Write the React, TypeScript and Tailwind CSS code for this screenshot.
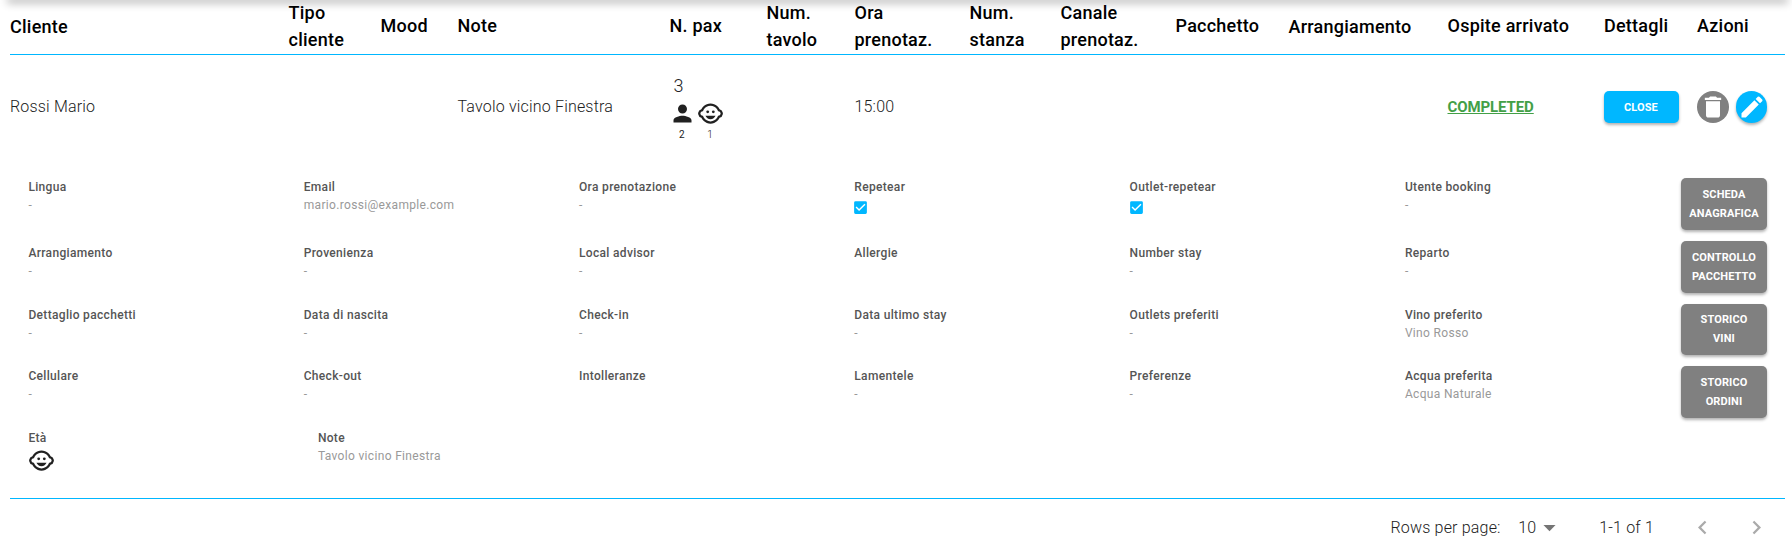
import { MdPerson, MdChildCare, MdDelete, MdEdit, MdCheckBox, MdArrowDropDown, MdChevronLeft, MdChevronRight } from 'react-icons/md';

const columns = [
  ['Cliente'], ['Tipo', 'cliente'], ['Mood'], ['Note'], ['N. pax'], ['Num.', 'tavolo'], ['Ora', 'prenotaz.'],
  ['Num.', 'stanza'], ['Canale', 'prenotaz.'], ['Pacchetto'], ['Arrangiamento'], ['Ospite arrivato'], ['Dettagli'], ['Azioni'],
];

const tableGrid =
  'grid grid-cols-[278.5px_92px_77px_212px_97px_88px_115px_91px_115px_113px_159px_156.5px_93px_1fr] items-center';

type Detail = { label: string; value?: string; checked?: boolean };

const details: Detail[][] = [
  [
    { label: 'Lingua', value: '-' }, { label: 'Email', value: 'mario.rossi@example.com' },
    { label: 'Ora prenotazione', value: '-' }, { label: 'Repetear', checked: true },
    { label: 'Outlet-repetear', checked: true }, { label: 'Utente booking', value: '-' },
  ],
  [
    { label: 'Arrangiamento', value: '-' }, { label: 'Provenienza', value: '-' },
    { label: 'Local advisor', value: '-' }, { label: 'Allergie' },
    { label: 'Number stay', value: '-' }, { label: 'Reparto', value: '-' },
  ],
  [
    { label: 'Dettaglio pacchetti', value: '-' }, { label: 'Data di nascita', value: '-' },
    { label: 'Check-in', value: '-' }, { label: 'Data ultimo stay', value: '-' },
    { label: 'Outlets preferiti', value: '-' }, { label: 'Vino preferito', value: 'Vino Rosso' },
  ],
  [
    { label: 'Cellulare', value: '-' }, { label: 'Check-out', value: '-' },
    { label: 'Intolleranze' }, { label: 'Lamentele', value: '-' },
    { label: 'Preferenze', value: '-' }, { label: 'Acqua preferita', value: 'Acqua Naturale' },
  ],
];

const actions = [['SCHEDA', 'ANAGRAFICA'], ['CONTROLLO', 'PACCHETTO'], ['STORICO', 'VINI'], ['STORICO', 'ORDINI']];

function Field({ label, value, checked }: Detail) {
  return (
    <div className="text-xs leading-[18px] tracking-[0.33px]">
      <div className="font-medium text-[#555]">{label}</div>
      {checked ? <MdCheckBox className="-ml-0.5 mt-[3px] size-[17px] text-[#00b7ff]" /> : <div className="text-[#999]">{value}</div>}
    </div>
  );
}

export default function App() {
  return (
    <div className="h-[542px] w-full overflow-hidden bg-white pl-2.5 pr-[7px] font-[Roboto,sans-serif]">
      <div className="h-0 shadow-[0_0_8px_3px_rgba(0,0,0,0.3)]" />
      <div className={`${tableGrid} -mt-px h-14 border-b border-[#00b7ff] pb-px text-lg font-medium leading-[27px] tracking-[0.24px] text-black`}>
        {columns.map((lines, i) => (
          <div key={i} className={`whitespace-nowrap ${lines.length > 1 || i === 0 || i === 10 ? '' : 'pb-0.5'}`}>
            {lines.map((line) => <div key={line}>{line}</div>)}
          </div>
        ))}
      </div>

      <div className={`${tableGrid} h-[105px] pb-0.5 text-base font-light text-[#212121] tracking-[0.18px]`}>
        <div>Rossi Mario</div>
        <div />
        <div />
        <div>Tavolo vicino Finestra</div>
        <div className="flex flex-col pt-[3px]">
          <span className="pl-[4px] text-lg leading-6">3</span>
          <div className="-ml-px mt-0.5 flex gap-px text-[10px] leading-4">
            <div className="flex flex-col items-center font-normal"><MdPerson className="size-[27px]" />2</div>
            <div className="flex flex-col items-center"><MdChildCare className="size-[27px]" />1</div>
          </div>
        </div>
        <div />
        <div>15:00</div>
        <div />
        <div />
        <div />
        <div />
        <div className="pt-0.5 text-[15px] font-bold tracking-[-0.1px] text-[#43a047] underline">COMPLETED</div>
        <button className="h-8 w-[75px] rounded-[5px] bg-[#00b7ff] pr-px text-[11px] font-bold leading-[33px] tracking-[0.1px] text-white shadow-[0_2px_3px_rgba(0,0,0,0.3)]">CLOSE</button>
        <div className="flex gap-[7px] text-white">
          <button className="flex size-8 items-center justify-center rounded-full bg-[#808080]"><MdDelete className="size-7" /></button>
          <button className="flex h-8 w-[31px] items-center justify-center rounded-full bg-[#00b7ff] shadow-[0_2px_3px_rgba(0,0,0,0.3)]"><MdEdit className="size-7" /></button>
        </div>
      </div>

      <div className="flex h-[339px] border-b border-[#00b7ff] pl-[18.400px] pr-[18px] pt-[18px]">
        <div className="flex-1">
          <div className="grid grid-cols-[repeat(6,275.300px)] grid-rows-[66px_62px_61px_62px]">
            {details.flat().map((d) => <Field key={d.label} {...d} />)}
          </div>
          <div className="grid grid-cols-[289.500px_1fr] text-xs leading-[18px] tracking-[0.3px]">
            <div>
              <div className="font-medium text-[#555]">Età</div>
              <MdChildCare className="size-[27px] text-[#212121]" />
            </div>
            <Field label="Note" value="Tavolo vicino Finestra" />
          </div>
        </div>
        <div className="flex w-[86px] shrink-0 flex-col gap-[11px]">
          {actions.map(([a, b]) => (
            <button key={a + b} className="h-[51.750px] rounded-[5px] bg-[#808080] text-[11px] font-bold leading-[19px] tracking-[0.12px] text-white shadow-[0_2px_3px_rgba(0,0,0,0.3)]">
              {a}<br />{b}
            </button>
          ))}
        </div>
      </div>

      <div className="flex h-[57px] items-center justify-end pr-[15px] text-base font-light tracking-[0.18px] text-[#212121]">
        <span>Rows per page:</span>
        <span className="ml-[17.500px]">10</span>
        <MdArrowDropDown className="-ml-px size-[29px] text-[#757575]" />
        <span className="ml-[35px]">1-1 of 1</span>
        <MdChevronLeft className="ml-[35px] size-[27px] text-[#aaa]" />
        <MdChevronRight className="ml-[27px] size-[27px] text-[#aaa]" />
      </div>
    </div>
  );
}
